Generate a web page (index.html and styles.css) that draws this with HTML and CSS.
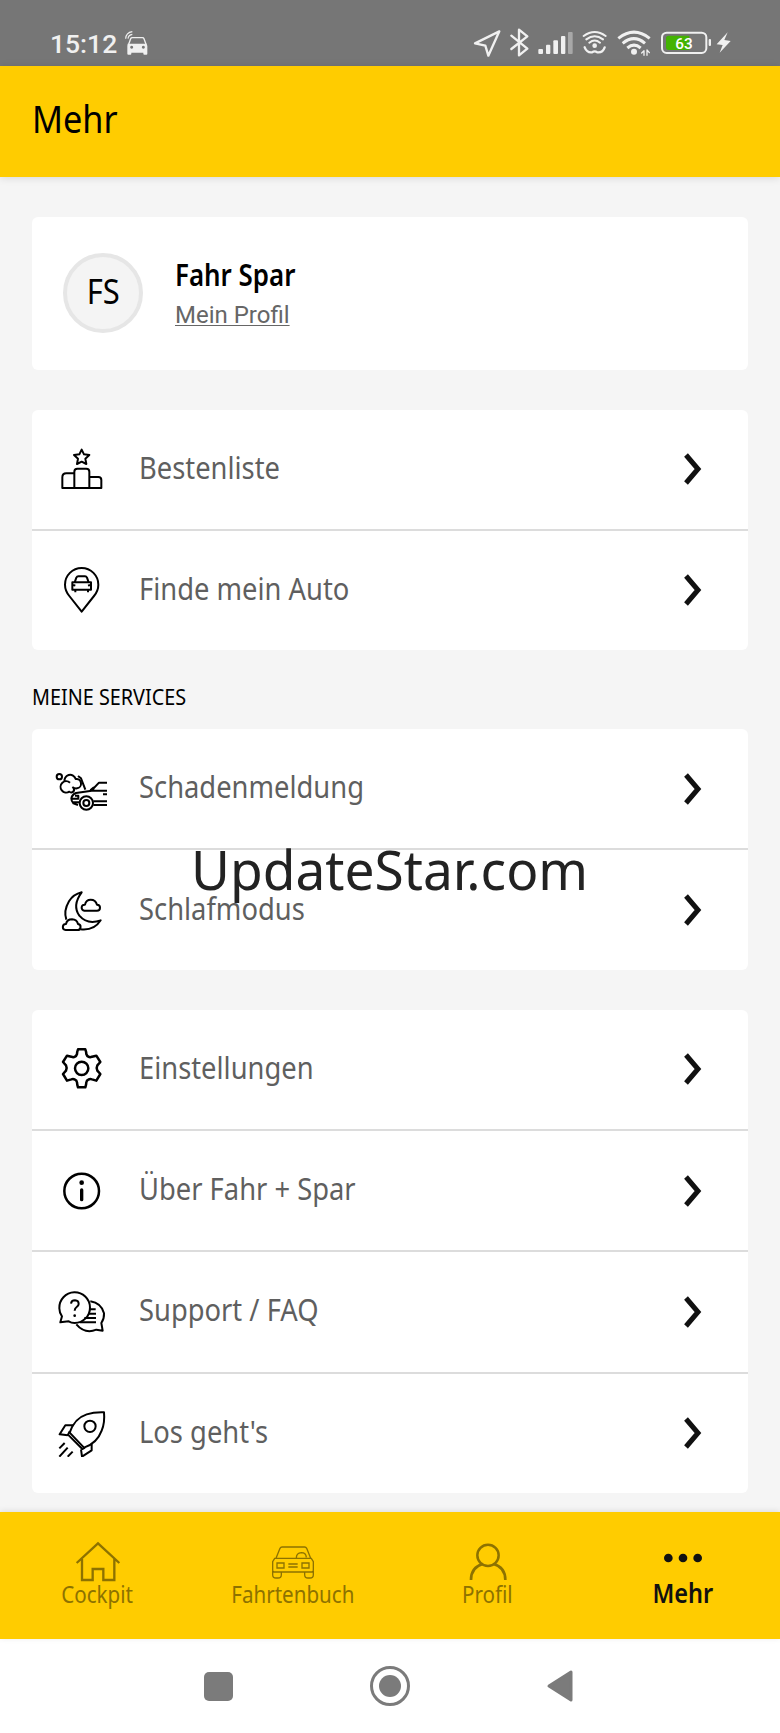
FILE: index.html
```html
<!DOCTYPE html>
<html lang="de">
<head>
    <meta charset="UTF-8">
    <meta name="viewport" content="width=device-width, initial-scale=1.0">
    <title>Mehr</title>
    <link rel="stylesheet" href="styles.css">
</head>
<body>

<div class="status-bar">
    <div class="clock">15:12</div>
    <svg class="status-car" width="24" height="26" viewBox="372 90 72 78">
        <path d="M377 116q1-18 20-21M384 116q1-11 13-13" fill="none" stroke="#f0f0f0" stroke-width="3.500"/>
        <path d="M386 133l6-17q1-3 5-3h30q4 0 5 3l6 17" fill="none" stroke="#f0f0f0" stroke-width="4"/>
        <path fill-rule="evenodd" d="M383 131h57l2 7v23q0 3-3 3h-6q-3 0-3-3v-3h-36v3q0 3-3 3h-6q-3 0-3-3v-23zM395 137a4.500 4.500 0 1 0 .1 0zM430 137a4.500 4.500 0 1 0 .1 0z" fill="#f0f0f0"/>
    </svg>
    <div class="status-icons">
        <svg width="36" height="30" viewBox="66 84 108 90" class="line-white">
            <path d="M148 94L75 130l31 7 9 30z" stroke-width="7"/>
        </svg>
        <svg width="27" height="30" viewBox="174 84 81 90" class="line-white">
            <path d="M184 107l48 39-25 20V89l25 20-48 38" stroke-width="7"/>
        </svg>
        <svg width="43" height="30" viewBox="255 84 129 90" fill="#f0f0f0">
            <rect x="265" y="147" width="14" height="15" rx="3"/>
            <rect x="288" y="134" width="13" height="28" rx="3"/>
            <rect x="310" y="121" width="14" height="41" rx="3"/>
            <rect x="333" y="108" width="13" height="54" rx="3"/>
            <rect x="354" y="96" width="14" height="66" rx="3" fill="#a8a8a8"/>
        </svg>
        <svg width="34" height="30" viewBox="384 84 102 90" class="line-white">
            <path d="M401 108q33-24 66 0M409 118q25-19 50 0M418 128q16-13 32 0" stroke-width="6"/>
            <circle cx="434" cy="137" r="7" fill="#f0f0f0" stroke="none"/>
            <path d="M404 142q7 17 22 15 8-6 16 0 16 2 22-15" stroke-width="7"/>
        </svg>
        <svg width="45" height="30" viewBox="486 84 135 90" class="line-white">
            <path d="M505 115q47-37 94 0M518 130q34-28 67 0M532 144q20-17 40 0" stroke-width="9" stroke-linecap="butt"/>
            <circle cx="552" cy="155" r="9" fill="#f0f0f0" stroke="none"/>
            <path d="M582 166v-14l-7 7M591 166v-16l7 8" stroke-width="4"/>
        </svg>
        <svg width="57" height="30" viewBox="621 84 171 90">
            <rect x="636" y="98" width="133" height="61" rx="14" fill="none" stroke="#f0f0f0" stroke-width="6"/>
            <path d="M656 107h62v43h-62q-8 0-8-8v-27q0-8 8-8z" fill="#43b302"/>
            <rect x="776" y="117" width="7" height="21" rx="3" fill="#f0f0f0"/>
            <text x="702" y="147" class="battery-text">63</text>
        </svg>
        <svg width="20" height="30" viewBox="792 84 60 90">
            <path d="M833 97l-33 36 18 2-9 23 33-35-19-3z" fill="#f0f0f0"/>
        </svg>
    </div>
</div>

<header class="header">
    <h1>Mehr</h1>
</header>

<main class="content">
    <div class="card profile">
        <div class="avatar"><span>FS</span></div>
        <div class="profile-text">
            <div class="profile-name">Fahr Spar</div>
            <a class="profile-link">Mein Profil</a>
        </div>
    </div>

    <div class="card">
        <div class="row">
            <svg class="icon" viewBox="72 136 168 144">
                <path d="M155 150l7 14 16 2-12 11 3 16-14-7-14 7 3-16-12-11 16-2z"/>
                <path d="M133 265v-49q0-9 9-9h27q9 0 9 9v49M131 221h-22q-12 0-12 12v32h117v-24q0-9-9-9h-25"/>
            </svg>
            <span class="label">Bestenliste</span>
            <svg class="chevron" viewBox="0 0 20 36"><path d="M4 4l12 14L4 32"/></svg>
        </div>
        <div class="row">
            <svg class="icon" viewBox="72 499 168 144">
                <path d="M155 636l-37-47q-13-16-13-34a50 50 0 0 1 100 0q0 18-13 34z"/>
                <path d="M134 548l5-14q2-4 6-4h20q4 0 6 4l5 14zM127 548h56v22h-56zM136 571v7M174 571v7M130 556l6 2M180 556l-6 2"/>
            </svg>
            <span class="label">Finde mein Auto</span>
            <svg class="chevron" viewBox="0 0 20 36"><path d="M4 4l12 14L4 32"/></svg>
        </div>
    </div>

    <h2>MEINE SERVICES</h2>

    <div class="card">
        <div class="row">
            <svg class="icon" viewBox="72 136 168 144">
                <circle cx="88" cy="171" r="8"/>
                <path d="M104 187a16 16 0 0 1 33-9 14 14 0 0 1 4 28q-7 1-14-4M120 189a17 17 0 1 0-2 27q5 5 12 0 5-7-1-13"/>
                <path d="M144 169l9 7 13 34M231 213h-46l-47 7q-12 5-14 16 0 9 6 15l14 5M186 211l21-22h24M181 212l9-8v7M125 237h20v-9h-10M219 224h12M190 245h41M190 256h41M128 248h22"/>
                <circle cx="169" cy="250" r="20"/>
                <circle cx="169" cy="250" r="9"/>
            </svg>
            <span class="label">Schadenmeldung</span>
            <svg class="chevron" viewBox="0 0 20 36"><path d="M4 4l12 14L4 32"/></svg>
        </div>
        <div class="row">
            <svg class="icon" viewBox="72 499 168 144">
                <path d="M109 600q-9-26 8-55 13-21 38-27-29 39-7 70 24 28 64 14-20 32-61 27"/>
                <path d="M107 631h34a9 9 0 0 0 3-18q-3-13-18-14-15 0-18 14a9 9 0 0 0-1 18zM163 573h38a9 9 0 0 0 0-18q-4-15-19-15-14 0-17 15a9 9 0 0 0-2 18z"/>
            </svg>
            <span class="label">Schlafmodus</span>
            <svg class="chevron" viewBox="0 0 20 36"><path d="M4 4l12 14L4 32"/></svg>
        </div>
        <div class="watermark">UpdateStar.com</div>
    </div>

    <div class="card">
        <div class="row">
            <svg class="icon" viewBox="72 136 168 144">
                <path d="M144 149h22q3 8 3 14 2 6 6 8 5 3 11 0l13-3 12 19-9 10q-4 8 0 16l9 10-12 20-13-4q-6-2-11 1-5 2-6 8 0 6-3 15h-22q-3-9-3-15-1-6-6-8-5-3-11-1l-13 4-12-20 9-10q4-8 0-16l-9-10 12-19 13 3q6 3 11 0 4-2 6-8 0-6 3-14z" stroke-width="7.500"/>
                <circle cx="155" cy="206" r="20" stroke-width="7.500"/>
            </svg>
            <span class="label">Einstellungen</span>
            <svg class="chevron" viewBox="0 0 20 36"><path d="M4 4l12 14L4 32"/></svg>
        </div>
        <div class="row">
            <svg class="icon" viewBox="72 500 168 144">
                <circle cx="155" cy="572" r="52" stroke-width="7.500"/>
                <path d="M155 569v29" stroke-width="10" stroke-linecap="round"/>
                <circle cx="155" cy="547" r="7" class="fill"/>
            </svg>
            <span class="label">Über Fahr + Spar</span>
            <svg class="chevron" viewBox="0 0 20 36"><path d="M4 4l12 14L4 32"/></svg>
        </div>
        <div class="row">
            <svg class="icon" viewBox="72 143 168 144">
                <path d="M91 246l5-18q-8-10-8-24a46 46 0 1 1 46 44q-10 0-18-5zM181 183q33 5 41 36 1 16-8 29l4 23-19-3q-34 14-60-16"/>
                <path d="M123 190q1-10 12-10 11 1 11 11 0 5-6 9-6 4-6 11M179 207h18M174 220h24M163 233h35M150 246h48"/>
                <circle cx="134" cy="226" r="4" class="fill"/>
            </svg>
            <span class="label">Support / FAQ</span>
            <svg class="chevron" viewBox="0 0 20 36"><path d="M4 4l12 14L4 32"/></svg>
        </div>
        <div class="row">
            <svg class="icon" viewBox="72 506 168 144">
                <path d="M119 577q14-43 51-55 22-7 52-6 3 31-7 55-14 38-53 51z"/>
                <path d="M119 573l-5 10 43 43 8-4M131 555h-25l-17 27 24 3M185 611v19l-29 19-3-22M104 608l-16 16M113 622l-25 27M128 634l-15 15"/>
                <circle cx="180" cy="558" r="17"/>
            </svg>
            <span class="label">Los geht's</span>
            <svg class="chevron" viewBox="0 0 20 36"><path d="M4 4l12 14L4 32"/></svg>
        </div>
    </div>
</main>

<nav class="tabs">
    <div class="tab">
        <svg width="50" height="44" viewBox="218 118 150 132">
            <path d="M229 190l64-59 64 59M245 178v63h32v-33h32v33h33v-63" stroke-width="7"/>
        </svg>
        <span>Cockpit</span>
    </div>
    <div class="tab">
        <svg width="50" height="44" viewBox="806 118 150 132">
            <path d="M830 176l12-30q2-4 6-4h68q4 0 6 4l12 30M826 176h110l6 10v26q0 5-5 5H825q-5 0-5-5v-26zM820 214v11q0 10 10 10h6q10 0 10-10v-8M916 217v8q0 10 10 10h6q10 0 10-10v-11M891 175q0-15 15-16 14 0 15 14M833 190h21v15h-21zM908 190h21v15h-21zM867 193h28M867 202h28" stroke-width="4"/>
        </svg>
        <span>Fahrtenbuch</span>
    </div>
    <div class="tab">
        <svg width="50" height="44" viewBox="219 118 150 132">
            <circle cx="294" cy="167" r="32" stroke-width="7.500"/>
            <path d="M243 241q0-38 35-48M346 241q0-38-35-48" stroke-width="8"/>
        </svg>
        <span>Profil</span>
    </div>
    <div class="tab active">
        <svg width="50" height="44" viewBox="802 118 150 132">
            <circle cx="833" cy="175" r="13"/>
            <circle cx="877" cy="175" r="13"/>
            <circle cx="921" cy="175" r="13"/>
        </svg>
        <span>Mehr</span>
    </div>
</nav>

<div class="system-bar">
    <div class="recent"></div>
    <div class="home"><div class="home-dot"></div></div>
    <svg class="back" width="28" height="34" viewBox="0 0 28 34">
        <path d="M3 17L25 3v28z"/>
    </svg>
</div>

</body>
</html>
```
FILE: styles.css
```css
* {
    box-sizing: border-box;
}

body {
    margin: 0;
    width: 780px;
    height: 1733px;
    display: flex;
    flex-direction: column;
    font-family: "Noto Sans", "Open Sans", sans-serif;
    background-color: #f5f5f5;
    color: #000;
    overflow: hidden;
}

svg {
    display: block;
    flex: none;
}

/* Status bar */
.status-bar {
    height: 65.5px;
    flex: none;
    display: flex;
    align-items: flex-start;
    background: #767676;
    padding: 28px 46px 0 50px;
}

.clock {
    width: 74px;
    font: 500 26.500px/31px Roboto, sans-serif;
    color: #f0f0f0;
    white-space: nowrap;
}

.status-car {
    margin-top: 2px;
}

.status-icons {
    display: flex;
    margin-left: auto;
}

.line-white {
    fill: none;
    stroke: #f0f0f0;
    stroke-linejoin: round;
    stroke-linecap: round;
}

.battery-text {
    font: 500 46px Roboto, sans-serif;
    fill: #fff;
    text-anchor: middle;
}

/* Header */
.header {
    height: 111px;
    flex: none;
    padding: 26px 32px;
    background: #ffcc00;
    box-shadow: 0 1px 8px rgba(0, 0, 0, 0.12);
}

h1 {
    margin: 0;
    font-size: 38px;
    font-weight: 400;
    line-height: 52px;
    transform: scaleX(0.9);
    transform-origin: left;
}

/* Cards */
.content {
    flex: 1;
    padding: 40px 32px 0;
}

.card {
    position: relative;
    margin-bottom: 40px;
    background: #fff;
    border-radius: 6px;
}

.card:last-child {
    margin-bottom: 0;
}

.profile {
    height: 153px;
    display: flex;
    align-items: center;
    padding-left: 31px;
}

.avatar {
    width: 80px;
    height: 80px;
    display: flex;
    align-items: center;
    justify-content: center;
    border: 4px solid #e6e6e6;
    border-radius: 50%;
    background: #f4f4f4;
    font-size: 34px;
}

.avatar span {
    transform: scaleX(0.91);
    margin-bottom: 4px;
}

.profile-text {
    margin: 3px 0 0 32px;
}

.profile-name {
    font-size: 31px;
    font-weight: 600;
    line-height: 40px;
    margin-top: -2px;
    white-space: nowrap;
    transform: scaleX(0.835);
    transform-origin: left;
}

.profile-link {
    display: block;
    margin-top: 3px;
    font: 24px/36px Roboto, sans-serif;
    color: #666;
    text-decoration: underline;
    text-decoration-thickness: 1px;
    text-underline-offset: 2px;
}

.row {
    height: 119.3px;
    display: flex;
    align-items: center;
    padding: 0 46px 0 22px;
}

.row + .row {
    height: 121.3px;
    border-top: 2px solid #dcdcdc;
}

.icon {
    width: 56px;
    height: 48px;
    fill: none;
    stroke: #000;
    stroke-width: 6;
    stroke-linejoin: round;
}

.icon .fill {
    fill: #000;
    stroke: none;
}

.label {
    flex: 1;
    margin-left: 29px;
    padding-bottom: 5px;
    font-size: 31px;
    line-height: 40px;
    color: #5f5f5f;
    white-space: nowrap;
    transform: scaleX(0.882);
    transform-origin: left;
}

.chevron {
    width: 20px;
    height: 36px;
    fill: none;
    stroke: #111;
    stroke-width: 5;
}

h2 {
    height: 39px;
    margin: -10px 0 10px;
    font-size: 22px;
    font-weight: 400;
    line-height: 32px;
    transform: scaleX(0.9);
    transform-origin: left;
}

.watermark {
    position: absolute;
    top: 102px;
    left: 159px;
    font-size: 55px;
    line-height: 76px;
    color: #222;
    white-space: nowrap;
    transform: scaleX(0.968);
    transform-origin: left;
}

/* Bottom tabs */
.tabs {
    position: relative;
    height: 127px;
    flex: none;
    display: flex;
    background: #ffcc00;
    box-shadow: 0 -1px 6px rgba(0, 0, 0, 0.1);
}

.tab {
    width: 195px;
    display: flex;
    flex-direction: column;
    align-items: center;
    padding-top: 27px;
    font-size: 23px;
    line-height: 22px;
    color: #8d7200;
}

.tab svg {
    fill: none;
    stroke: #8d7200;
}

.tab span {
    transform: scaleX(0.895);
}

.tab.active {
    color: #111;
    font-size: 27px;
    font-weight: 600;
    line-height: 20px;
}

.tab.active svg {
    fill: #111;
    stroke: none;
}

.tab.active span {
    transform: scaleX(0.87);
}

/* Android navigation */
.system-bar {
    height: 94px;
    flex: none;
    display: flex;
    align-items: center;
    background: #fff;
    padding-left: 204px;
}

.recent {
    width: 29px;
    height: 29px;
    border-radius: 5px;
    background: #7b7b7b;
}

.home {
    width: 40px;
    height: 40px;
    display: flex;
    align-items: center;
    justify-content: center;
    margin: 0 136px 0 137px;
    border: 3.500px solid #7b7b7b;
    border-radius: 50%;
}

.home-dot {
    width: 22px;
    height: 22px;
    border-radius: 50%;
    background: #7b7b7b;
}

.back path {
    fill: #7b7b7b;
    stroke: #7b7b7b;
    stroke-width: 3;
    stroke-linejoin: round;
}
```
